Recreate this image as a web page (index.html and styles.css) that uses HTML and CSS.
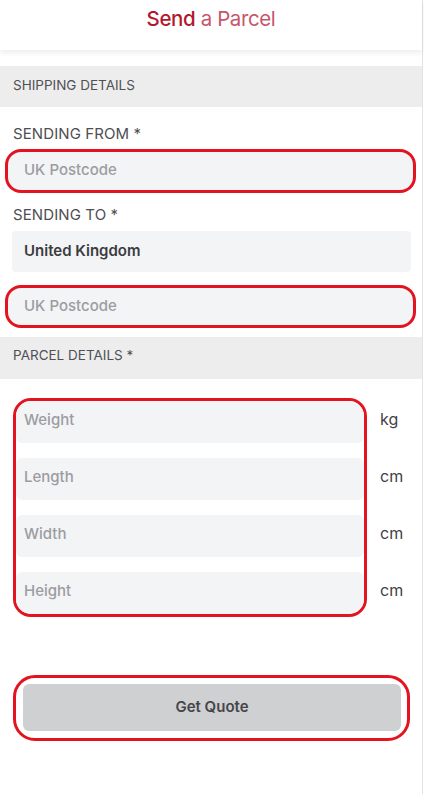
FILE: index.html
```html
<!DOCTYPE html>
<html lang="en">
<head>
<meta charset="utf-8">
<title>Send a Parcel</title>
<link rel="stylesheet" href="styles.css">
</head>
<body>
<div class="page">
  <header class="topbar">
    <h1 class="title"><span class="title-strong">Send</span> <span class="title-light">a Parcel</span></h1>
  </header>

  <div class="section-bar">SHIPPING DETAILS</div>

  <div class="label label-from">SENDING FROM *</div>
  <input class="field-ring" type="text" placeholder="UK Postcode">

  <div class="label label-to">SENDING TO *</div>
  <div class="country">United Kingdom</div>
  <input class="field-ring field-ring-2" type="text" placeholder="UK Postcode">

  <div class="section-bar section-bar-2">PARCEL DETAILS *</div>

  <div class="parcel">
    <div class="parcel-ring">
      <input class="pfield" type="text" placeholder="Weight">
      <input class="pfield" type="text" placeholder="Length">
      <input class="pfield" type="text" placeholder="Width">
      <input class="pfield" type="text" placeholder="Height">
    </div>
    <div class="units">
      <span class="unit">kg</span>
      <span class="unit">cm</span>
      <span class="unit">cm</span>
      <span class="unit">cm</span>
    </div>
  </div>

  <div class="btn-ring">
    <button class="btn" type="button">Get Quote</button>
  </div>
</div>
</body>
</html>
```

FILE: styles.css
```css
* { box-sizing: border-box; }
html, body { margin: 0; padding: 0; background: #ffffff; }
body {
  font-family: Inter, Lato, sans-serif;
  color: #4a4a4f;
}
.page {
  width: 423px;
  min-height: 794px;
  border-right: 1px solid #e2e2e4;
  display: flex;
  flex-direction: column;
  background: #fff;
}
.topbar {
  height: 50px;
  display: flex;
  align-items: center;
  justify-content: center;
  box-shadow: 0 3px 5px rgba(0,0,0,0.07);
  position: relative;
  z-index: 1;
}
.title {
  margin: -11px 0 0 0;
  font-size: 20.5px;
  font-weight: 400;
  letter-spacing: -0.4px;
  line-height: 1;
}
.title-strong { color: #b3182e; font-weight: 500; }
.title-light { color: #c7566a; }

.section-bar {
  margin-top: 16px;
  height: 41px;
  background: #ededee;
  display: flex;
  align-items: center;
  padding-left: 13px;
  padding-bottom: 3px;
  font-size: 13.5px;
  color: #505055;
}
.section-bar-2 {
  margin-top: 9px;
  height: 42px;
  align-items: flex-start;
  padding-top: 10px;
  padding-bottom: 0;
}

.label {
  margin-left: 13px;
  font-size: 15px;
  color: #4e4e53;
  line-height: 18px;
  letter-spacing: 0.1px;
}
.label-from { margin-top: 18px; }
.label-to { margin-top: 13px; }

.field-ring {
  display: block;
  margin: 6px 6px 0 5px;
  height: 44px;
  border: 3px solid #e3141f;
  border-radius: 16px;
  background: #f3f4f6;
  padding: 0 0 3px 16px;
  font-family: Inter, Lato, sans-serif;
  font-size: 15px;
  font-weight: 500;
  color: #333;
  outline: none;
  width: auto;
}
.field-ring::placeholder { color: #9c9ca1; }
.field-ring-2 { margin-top: 13px; height: 43px; }

.country {
  margin: 7px 11px 0 12px;
  height: 41px;
  background: #f3f4f6;
  border-radius: 4px;
  display: flex;
  align-items: center;
  padding-left: 12px;
  padding-bottom: 3px;
  font-size: 15px;
  font-weight: 600;
  color: #3b3b40;
}

.parcel {
  margin-top: 19px;
  display: flex;
  align-items: flex-start;
}
.parcel-ring {
  margin-left: 13px;
  width: 354px;
  border: 3px solid #e3141f;
  border-radius: 18px;
  display: flex;
  flex-direction: column;
  gap: 15px;
  overflow: hidden;
}
.pfield {
  display: block;
  height: 42px;
  width: 100%;
  border: none;
  border-radius: 6px;
  background: #f3f4f6;
  padding: 0 0 5px 8px;
  font-family: Inter, Lato, sans-serif;
  font-size: 15px;
  font-weight: 500;
  outline: none;
}
.pfield::placeholder { color: #9c9ca1; }

.units {
  margin-left: 13px;
  padding-top: 0;
  display: flex;
  flex-direction: column;
  gap: 15px;
}
.unit {
  height: 42px;
  display: flex;
  align-items: center;
  font-size: 16px;
  color: #3f3f44;
}

.btn-ring {
  margin: 58px 12px 0 13px;
  border: 3px solid #e3141f;
  border-radius: 22px;
  padding: 6px 6px 7px 7px;
}
.btn {
  display: block;
  width: 100%;
  height: 47px;
  border: none;
  border-radius: 6px;
  background: #cfd0d2;
  font-family: Inter, Lato, sans-serif;
  font-size: 15px;
  font-weight: 600;
  color: #45454a;
  padding-bottom: 4px;
  cursor: pointer;
}
```
